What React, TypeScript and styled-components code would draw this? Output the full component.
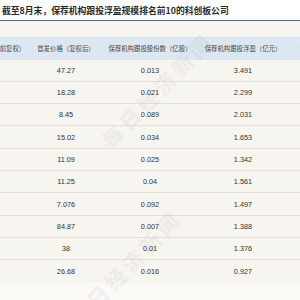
import React from "react";
import styled, { createGlobalStyle } from "styled-components";

const GlobalStyle = createGlobalStyle`
  html, body { margin: 0; padding: 0; background: #fbfaf7; }
  * { box-sizing: border-box; }
`;

const Page = styled.div`
  position: relative;
  width: 300px;
  height: 300px;
  overflow: hidden;
  background: #fbfaf7;
  font-family: "Liberation Sans", "Noto Sans CJK SC", sans-serif;
`;

const TitleBar = styled.div`
  height: 21px;
  display: flex;
  align-items: center;
  padding: 1px 0 0 2px;
  background: #ffffff;
  border-bottom: 1px solid #4f6d9c;
  font-family: "Noto Sans CJK SC", sans-serif;
  font-size: 8.8px;
  font-weight: 700;
  color: #2a2a2a;
  white-space: nowrap;
`;

const Band = styled.div`
  height: 16.3px;
  background: #f7f5f0;
`;

const Clip = styled.div`
  overflow: hidden;
  width: 300px;
`;

const Table = styled.div`
  width: 412px;
  margin-left: -52px;
  display: flex;
  flex-direction: column;
`;

const Row = styled.div<{ $head?: boolean; $last?: boolean }>`
  display: grid;
  grid-template-columns: 80px 76px 92px 94px 70px;
  height: 22.3px;
  align-items: center;
  background: ${(p) => (p.$head ? "#dde7f1" : "#f7f5f0")};
  border-bottom: ${(p) => (p.$head || p.$last ? "none" : "1px solid #e4e1da")};
`;

const HeadCell = styled.div`
  text-align: center;
  font-family: "Noto Sans CJK SC", sans-serif;
  font-size: 6.4px;
  color: #4a4a4a;
  white-space: nowrap;
`;

const Cell = styled.div`
  text-align: center;
  font-family: "Liberation Sans", sans-serif;
  font-size: 7.3px;
  color: #333333;
  white-space: nowrap;
`;

const Watermark = styled.div<{ $x: number; $y: number }>`
  position: absolute;
  left: ${(p) => p.$x}px;
  top: ${(p) => p.$y}px;
  transform: translate(-50%, -50%) rotate(-46deg);
  font-family: "Noto Sans CJK SC", sans-serif;
  font-weight: 900;
  font-size: 21px;
  letter-spacing: 4px;
  color: rgba(140, 140, 140, 0.09);
  white-space: nowrap;
  pointer-events: none;
`;

const heads = [
  "8月30日收盘价（前复权）",
  "首发价格（复权后）",
  "保荐机构跟投股份数（亿股）",
  "保荐机构跟投浮盈（亿元）",
  "首发募资（亿元）",
];

const rows: [string, string, string, string, string][] = [
  ["140.12", "47.27", "0.013", "3.491", "—"],
  ["127.76", "18.28", "0.021", "2.299", "—"],
  ["31.27", "8.45", "0.089", "2.031", "—"],
  ["63.64", "15.02", "0.034", "1.653", "—"],
  ["64.78", "11.09", "0.025", "1.342", "—"],
  ["50.28", "11.25", "0.04", "1.561", "—"],
  ["23.35", "7.076", "0.092", "1.497", "—"],
  ["283.15", "84.87", "0.007", "1.388", "—"],
  ["175.6", "38", "0.01", "1.376", "—"],
  ["84.62", "26.68", "0.016", "0.927", "—"],
];

export default function App() {
  return (
    <>
      <GlobalStyle />
      <Page>
        <TitleBar>截至8月末，保荐机构跟投浮盈规模排名前10的科创板公司</TitleBar>
        <Band />
        <Clip>
          <Table>
            <Row $head>
              {heads.map((h) => (
                <HeadCell key={h}>{h}</HeadCell>
              ))}
            </Row>
            {rows.map((r, i) => (
              <Row key={i} $last={i === rows.length - 1}>
                {r.map((v, j) => (
                  <Cell key={j}>{v}</Cell>
                ))}
              </Row>
            ))}
          </Table>
        </Clip>
        <Watermark $x={157} $y={90}>每日经济新闻</Watermark>
        <Watermark $x={125} $y={268}>每日经济新闻</Watermark>
      </Page>
    </>
  );
}
